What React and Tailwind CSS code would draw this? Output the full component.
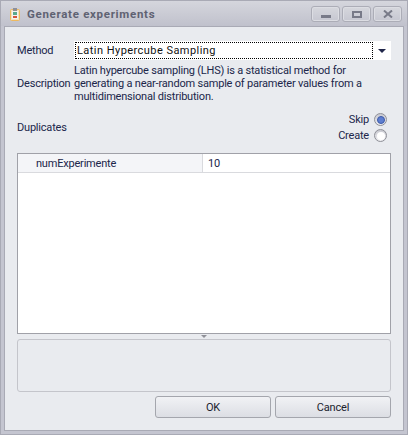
import React from 'react';

const WindowButton = ({ children }) => (
  <div className="w-[29px] h-[16px] flex items-center justify-center rounded-[3px] border border-[#acadb7] bg-gradient-to-b from-[#d6d7dd] to-[#c6c7d1] shadow-[inset_0_0_0_1px_#dcdde3]">
    {children}
  </div>
);

const Radio = ({ checked }) => (
  <div className="w-[13px] h-[13px] rounded-full border border-[#8f9098] bg-gradient-to-b from-[#c8c9d0] to-[#f0f0f3] flex items-center justify-center">
    <div className={`w-[8px] h-[8px] rounded-full ${checked ? 'bg-[#5f7fd0] border border-[#3c5aa8]' : 'bg-white'}`} />
  </div>
);

const DialogButton = ({ children }) => (
  <button className="w-[116px] h-[22px] rounded-[3px] border border-[#a4a6ad] bg-gradient-to-b from-[#f1f2f5] to-[#dcdee4] text-[#20222e] text-[11px] leading-none">
    {children}
  </button>
);

export default function App() {
  return (
    <div className="w-[408px] h-[435px] flex flex-col bg-[#c4c5d0] border border-[#a9aab5] text-[11px] text-[#20264a] leading-[13px] tracking-[-0.2px] font-['Roboto',sans-serif]">
      <div className="h-[25px] shrink-0 flex items-center pl-[9px] pr-[5px] bg-gradient-to-b from-[#d5d6dd] to-[#c0c1cc]">
        <svg width="10" height="13" viewBox="0 0 10 13" className="shrink-0 mt-[1px]">
          <rect x="0.5" y="1.5" width="9" height="11" rx="1" fill="#f6e3bd" stroke="#eeb95f" />
          <rect x="2" y="3" width="6" height="8" fill="#f3f3f3" />
          <rect x="3" y="0" width="4" height="3" fill="#8f9098" />
          <rect x="3" y="4" width="4" height="3" fill="#5aa88e" />
          <rect x="3" y="8" width="4" height="2" fill="#d4553f" />
        </svg>
        <span className="ml-[7px] mt-[2px] font-bold text-[#5f6272] text-[11.5px] tracking-[0.7px]">Generate experiments</span>
        <div className="ml-auto flex gap-[2px] mt-[1px]">
          <WindowButton>
            <div className="w-[10px] h-[3px] mt-[5px] bg-[#787a88]" />
          </WindowButton>
          <WindowButton>
            <div className="w-[10px] h-[7px] border-2 border-[#787a88]" />
          </WindowButton>
          <WindowButton>
            <svg width="10" height="8" viewBox="0 0 10 8">
              <path d="M1 0.5 L9 7.5 M9 0.5 L1 7.5" stroke="#787a88" strokeWidth="2" />
            </svg>
          </WindowButton>
        </div>
      </div>

      <div className="flex-1 mx-[3px] mb-[3px] border border-[#a9aab5] bg-[#e9ebef] pl-[12px] pr-[12px] flex flex-col">
        <div className="flex items-center mt-[14px] h-[19px]">
          <span className="w-[57px] shrink-0">Method</span>
          <div className="w-[317px] h-[19px] bg-white flex items-center p-px pr-0">
            <div className="flex-1 h-[17px] border border-dotted border-black flex items-center px-[1px] text-[#111] tracking-[0.45px]">
              Latin Hypercube Sampling
            </div>
            <div className="w-[18px] flex justify-center">
              <div className="w-0 h-0 border-x-[4px] border-x-transparent border-t-[4px] border-t-[#20264a]" />
            </div>
          </div>
        </div>

        <div className="flex items-center mt-[4px] h-[39px]">
          <span className="w-[57px] shrink-0">Description</span>
          <p className="w-[295px]">
            Latin hypercube sampling (LHS) is a statistical method for generating a near-random sample of parameter values from a multidimensional distribution.
          </p>
        </div>

        <div className="flex items-center h-[33px] mt-[8px] pr-[4px]">
          <span>Duplicates</span>
          <div className="ml-auto flex flex-col gap-[3px] items-end">
            <div className="flex items-center gap-[5px]"><span>Skip</span><Radio checked /></div>
            <div className="flex items-center gap-[5px]"><span>Create</span><Radio /></div>
          </div>
        </div>

        <div className="mt-[9px] h-[181px] shrink-0 bg-white border border-[#a0a1a8]">
          <div className="h-[19px] flex border-b border-[#d9dade]">
            <div className="w-[185px] pl-[18px] flex items-center bg-[#f4f5f8] border-r border-[#d9dade]">numExperimente</div>
            <div className="flex-1 pl-[5px] flex items-center">10</div>
          </div>
        </div>

        <div className="h-[5px] flex justify-center items-center">
          <div className="w-0 h-0 border-x-[3px] border-x-transparent border-t-[3px] border-t-[#8f9098]" />
        </div>

        <div className="h-[53px] shrink-0 rounded-[3px] border border-[#c4c5cb]" />

        <div className="mt-[4px] flex justify-end gap-[4px]">
          <DialogButton>OK</DialogButton>
          <DialogButton>Cancel</DialogButton>
        </div>
      </div>
    </div>
  );
}
